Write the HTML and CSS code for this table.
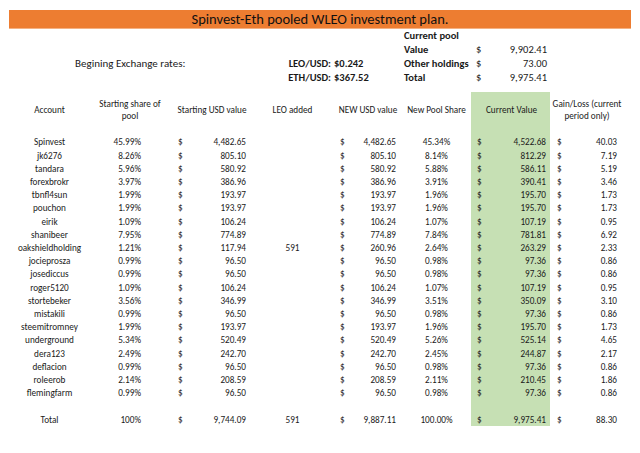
FILE: index.html
```html
<!DOCTYPE html>
<html>
<head>
<meta charset="utf-8">
<link rel="stylesheet" href="styles.css">
</head>
<body>
<div class="page">
  <div class="banner">Spinvest-Eth pooled WLEO investment plan.</div>
  <div class="summary">
    <div></div><div></div><div></div><div class="b">Current pool</div><div></div>
    <div></div><div></div><div></div><div class="b">Value</div><div class="money"><span>$</span><span>9,902.41</span></div>
    <div class="rates">Begining Exchange rates:</div><div class="b lab">LEO/USD:</div><div class="b val">$0.242</div><div class="b">Other holdings</div><div class="money"><span>$</span><span>73.00</span></div>
    <div></div><div class="b lab">ETH/USD:</div><div class="b val">$367.52</div><div class="b">Total</div><div class="money"><span>$</span><span>9,975.41</span></div>
  </div>
  <table class="grid">
    <colgroup>
      <col class="w1"><col class="w2"><col class="w3"><col class="w4"><col class="w5"><col class="w6"><col class="w7"><col class="w8">
    </colgroup>
    <thead>
      <tr class="head">
        <th class="acc"><div class="hc"><span>Account</span></div></th>
        <th class="shh"><div class="hc"><span>Starting share of</span><span>pool</span></div></th>
        <th class="c3"><div class="hc"><span>Starting USD value</span></div></th>
        <th class="c4"><div class="hc"><span>LEO added</span></div></th>
        <th class="c5"><div class="hc"><span>NEW USD value</span></div></th>
        <th class="c6"><div class="hc"><span>New Pool Share</span></div></th>
        <th class="c7 green"><div class="hc"><span>Current Value</span></div></th>
        <th class="c8"><div class="hc"><span>Gain/Loss (current</span><span>period only)</span></div></th>
      </tr>
    </thead>
    <tbody>
      <tr class="r"><td class="acc"><div class="cc">Spinvest</div></td><td class="sh">45.99%</td><td class="c3"><div class="money"><span>$</span><span>4,482.65</span></div></td><td class="c4"></td><td class="c5"><div class="money"><span>$</span><span>4,482.65</span></div></td><td class="c6">45.34%</td><td class="c7 green"><div class="money"><span>$</span><span>4,522.68</span></div></td><td class="c8"><div class="money"><span>$</span><span>40.03</span></div></td></tr>
      <tr class="r"><td class="acc"><div class="cc">jk6276</div></td><td class="sh">8.26%</td><td class="c3"><div class="money"><span>$</span><span>805.10</span></div></td><td class="c4"></td><td class="c5"><div class="money"><span>$</span><span>805.10</span></div></td><td class="c6">8.14%</td><td class="c7 green"><div class="money"><span>$</span><span>812.29</span></div></td><td class="c8"><div class="money"><span>$</span><span>7.19</span></div></td></tr>
      <tr class="r"><td class="acc"><div class="cc">tandara</div></td><td class="sh">5.96%</td><td class="c3"><div class="money"><span>$</span><span>580.92</span></div></td><td class="c4"></td><td class="c5"><div class="money"><span>$</span><span>580.92</span></div></td><td class="c6">5.88%</td><td class="c7 green"><div class="money"><span>$</span><span>586.11</span></div></td><td class="c8"><div class="money"><span>$</span><span>5.19</span></div></td></tr>
      <tr class="r"><td class="acc"><div class="cc">forexbrokr</div></td><td class="sh">3.97%</td><td class="c3"><div class="money"><span>$</span><span>386.96</span></div></td><td class="c4"></td><td class="c5"><div class="money"><span>$</span><span>386.96</span></div></td><td class="c6">3.91%</td><td class="c7 green"><div class="money"><span>$</span><span>390.41</span></div></td><td class="c8"><div class="money"><span>$</span><span>3.46</span></div></td></tr>
      <tr class="r"><td class="acc"><div class="cc">tbnfl4sun</div></td><td class="sh">1.99%</td><td class="c3"><div class="money"><span>$</span><span>193.97</span></div></td><td class="c4"></td><td class="c5"><div class="money"><span>$</span><span>193.97</span></div></td><td class="c6">1.96%</td><td class="c7 green"><div class="money"><span>$</span><span>195.70</span></div></td><td class="c8"><div class="money"><span>$</span><span>1.73</span></div></td></tr>
      <tr class="r"><td class="acc"><div class="cc">pouchon</div></td><td class="sh">1.99%</td><td class="c3"><div class="money"><span>$</span><span>193.97</span></div></td><td class="c4"></td><td class="c5"><div class="money"><span>$</span><span>193.97</span></div></td><td class="c6">1.96%</td><td class="c7 green"><div class="money"><span>$</span><span>195.70</span></div></td><td class="c8"><div class="money"><span>$</span><span>1.73</span></div></td></tr>
      <tr class="r"><td class="acc"><div class="cc">eirik</div></td><td class="sh">1.09%</td><td class="c3"><div class="money"><span>$</span><span>106.24</span></div></td><td class="c4"></td><td class="c5"><div class="money"><span>$</span><span>106.24</span></div></td><td class="c6">1.07%</td><td class="c7 green"><div class="money"><span>$</span><span>107.19</span></div></td><td class="c8"><div class="money"><span>$</span><span>0.95</span></div></td></tr>
      <tr class="r"><td class="acc"><div class="cc">shanibeer</div></td><td class="sh">7.95%</td><td class="c3"><div class="money"><span>$</span><span>774.89</span></div></td><td class="c4"></td><td class="c5"><div class="money"><span>$</span><span>774.89</span></div></td><td class="c6">7.84%</td><td class="c7 green"><div class="money"><span>$</span><span>781.81</span></div></td><td class="c8"><div class="money"><span>$</span><span>6.92</span></div></td></tr>
      <tr class="r"><td class="acc"><div class="cc">oakshieldholding</div></td><td class="sh">1.21%</td><td class="c3"><div class="money"><span>$</span><span>117.94</span></div></td><td class="c4">591</td><td class="c5"><div class="money"><span>$</span><span>260.96</span></div></td><td class="c6">2.64%</td><td class="c7 green"><div class="money"><span>$</span><span>263.29</span></div></td><td class="c8"><div class="money"><span>$</span><span>2.33</span></div></td></tr>
      <tr class="r"><td class="acc"><div class="cc">jocieprosza</div></td><td class="sh">0.99%</td><td class="c3"><div class="money"><span>$</span><span>96.50</span></div></td><td class="c4"></td><td class="c5"><div class="money"><span>$</span><span>96.50</span></div></td><td class="c6">0.98%</td><td class="c7 green"><div class="money"><span>$</span><span>97.36</span></div></td><td class="c8"><div class="money"><span>$</span><span>0.86</span></div></td></tr>
      <tr class="r"><td class="acc"><div class="cc">josediccus</div></td><td class="sh">0.99%</td><td class="c3"><div class="money"><span>$</span><span>96.50</span></div></td><td class="c4"></td><td class="c5"><div class="money"><span>$</span><span>96.50</span></div></td><td class="c6">0.98%</td><td class="c7 green"><div class="money"><span>$</span><span>97.36</span></div></td><td class="c8"><div class="money"><span>$</span><span>0.86</span></div></td></tr>
      <tr class="r"><td class="acc"><div class="cc">roger5120</div></td><td class="sh">1.09%</td><td class="c3"><div class="money"><span>$</span><span>106.24</span></div></td><td class="c4"></td><td class="c5"><div class="money"><span>$</span><span>106.24</span></div></td><td class="c6">1.07%</td><td class="c7 green"><div class="money"><span>$</span><span>107.19</span></div></td><td class="c8"><div class="money"><span>$</span><span>0.95</span></div></td></tr>
      <tr class="r"><td class="acc"><div class="cc">stortebeker</div></td><td class="sh">3.56%</td><td class="c3"><div class="money"><span>$</span><span>346.99</span></div></td><td class="c4"></td><td class="c5"><div class="money"><span>$</span><span>346.99</span></div></td><td class="c6">3.51%</td><td class="c7 green"><div class="money"><span>$</span><span>350.09</span></div></td><td class="c8"><div class="money"><span>$</span><span>3.10</span></div></td></tr>
      <tr class="r"><td class="acc"><div class="cc">mistakili</div></td><td class="sh">0.99%</td><td class="c3"><div class="money"><span>$</span><span>96.50</span></div></td><td class="c4"></td><td class="c5"><div class="money"><span>$</span><span>96.50</span></div></td><td class="c6">0.98%</td><td class="c7 green"><div class="money"><span>$</span><span>97.36</span></div></td><td class="c8"><div class="money"><span>$</span><span>0.86</span></div></td></tr>
      <tr class="r"><td class="acc"><div class="cc">steemitromney</div></td><td class="sh">1.99%</td><td class="c3"><div class="money"><span>$</span><span>193.97</span></div></td><td class="c4"></td><td class="c5"><div class="money"><span>$</span><span>193.97</span></div></td><td class="c6">1.96%</td><td class="c7 green"><div class="money"><span>$</span><span>195.70</span></div></td><td class="c8"><div class="money"><span>$</span><span>1.73</span></div></td></tr>
      <tr class="r"><td class="acc"><div class="cc">underground</div></td><td class="sh">5.34%</td><td class="c3"><div class="money"><span>$</span><span>520.49</span></div></td><td class="c4"></td><td class="c5"><div class="money"><span>$</span><span>520.49</span></div></td><td class="c6">5.26%</td><td class="c7 green"><div class="money"><span>$</span><span>525.14</span></div></td><td class="c8"><div class="money"><span>$</span><span>4.65</span></div></td></tr>
      <tr class="r"><td class="acc"><div class="cc">dera123</div></td><td class="sh">2.49%</td><td class="c3"><div class="money"><span>$</span><span>242.70</span></div></td><td class="c4"></td><td class="c5"><div class="money"><span>$</span><span>242.70</span></div></td><td class="c6">2.45%</td><td class="c7 green"><div class="money"><span>$</span><span>244.87</span></div></td><td class="c8"><div class="money"><span>$</span><span>2.17</span></div></td></tr>
      <tr class="r"><td class="acc"><div class="cc">deflacion</div></td><td class="sh">0.99%</td><td class="c3"><div class="money"><span>$</span><span>96.50</span></div></td><td class="c4"></td><td class="c5"><div class="money"><span>$</span><span>96.50</span></div></td><td class="c6">0.98%</td><td class="c7 green"><div class="money"><span>$</span><span>97.36</span></div></td><td class="c8"><div class="money"><span>$</span><span>0.86</span></div></td></tr>
      <tr class="r"><td class="acc"><div class="cc">roleerob</div></td><td class="sh">2.14%</td><td class="c3"><div class="money"><span>$</span><span>208.59</span></div></td><td class="c4"></td><td class="c5"><div class="money"><span>$</span><span>208.59</span></div></td><td class="c6">2.11%</td><td class="c7 green"><div class="money"><span>$</span><span>210.45</span></div></td><td class="c8"><div class="money"><span>$</span><span>1.86</span></div></td></tr>
      <tr class="r"><td class="acc"><div class="cc">flemingfarm</div></td><td class="sh">0.99%</td><td class="c3"><div class="money"><span>$</span><span>96.50</span></div></td><td class="c4"></td><td class="c5"><div class="money"><span>$</span><span>96.50</span></div></td><td class="c6">0.98%</td><td class="c7 green"><div class="money"><span>$</span><span>97.36</span></div></td><td class="c8"><div class="money"><span>$</span><span>0.86</span></div></td></tr>
      <tr class="r"><td></td><td></td><td></td><td></td><td></td><td></td><td class="green"></td><td></td></tr>
      <tr class="r"><td class="acc"><div class="cc">Total</div></td><td class="sh">100%</td><td class="c3"><div class="money"><span>$</span><span>9,744.09</span></div></td><td class="c4">591</td><td class="c5"><div class="money"><span>$</span><span>9,887.11</span></div></td><td class="c6">100.00%</td><td class="c7 green"><div class="money"><span>$</span><span>9,975.41</span></div></td><td class="c8"><div class="money"><span>$</span><span>88.30</span></div></td></tr>
    </tbody>
  </table>
</div>
</body>
</html>
```

FILE: styles.css
```css
html, body {
  margin: 0;
  padding: 0;
  background: #ffffff;
}
body {
  font-family: "Carlito", "Lato", "Liberation Sans", sans-serif;
  color: #1a1a1a;
}
.page {
  padding: 10px 0 0 9px;
}
.banner {
  width: 622px;
  height: 18px;
  line-height: 18px;
  background: #ED7D31;
  border-bottom: 1px solid #F4B183;
  text-align: center;
  font-size: 14.5px;
  color: #111;
}
.summary {
  display: grid;
  grid-template-columns: 180px 76px 73px 72px 71px;
  grid-auto-rows: 14px;
  margin-left: 66px;
  margin-bottom: 7px;
  font-size: 10.5px;
  line-height: 14px;
}
.summary .b { font-weight: bold; }
.summary .lab { text-align: right; }
.summary .val { padding-left: 3px; }
.summary .rates { font-size: 11px; }
.money {
  display: flex;
  justify-content: space-between;
  white-space: nowrap;
}
.grid {
  border-collapse: collapse;
  table-layout: fixed;
  width: 616px;
  font-size: 9.2px;
}
.w1 { width: 86px; }
.w2 { width: 57px; }
.w3 { width: 98px; }
.w4 { width: 85px; }
.w5 { width: 65px; }
.w6 { width: 71px; }
.w7 { width: 79px; }
.w8 { width: 75px; }
.grid th {
  font-weight: normal;
  height: 24px;
  padding: 6px 0 13.4px 0;
  line-height: 12px;
  vertical-align: middle;
  white-space: nowrap;
}
.hc {
  display: flex;
  flex-direction: column;
  align-items: center;
  justify-content: center;
}
.cc {
  display: flex;
  justify-content: center;
}
.grid td {
  height: 13.2px;
  padding: 0;
  line-height: 13.2px;
  white-space: nowrap;
  vertical-align: middle;
}
.grid .acc { padding-right: 5px; }
.grid .sh { text-align: right; padding-right: 11px; }
.grid th.shh { padding-left: 13px; }
.grid .c3 { padding-left: 26px; padding-right: 4px; }
.grid .c4 { text-align: center; }
.grid .c5 { padding-left: 5px; padding-right: 4px; }
.grid .c6 { text-align: center; padding-left: 2px; }
.grid .c7 { padding-left: 6px; padding-right: 4px; }
.grid .c8 { padding-left: 7px; padding-right: 8px; }
.grid .green { background: #C6E0B4; }
```
